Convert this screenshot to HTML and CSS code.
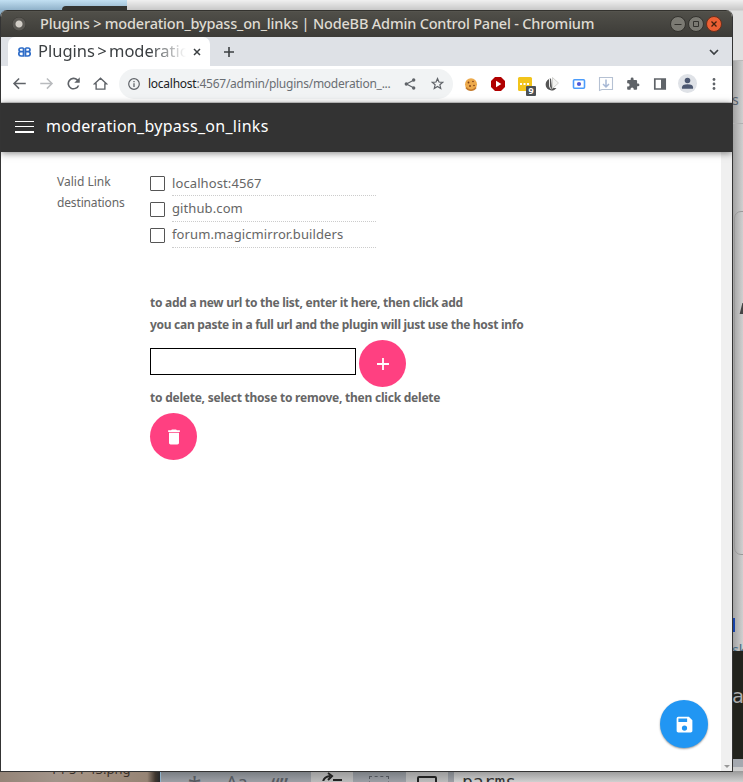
FILE: index.html
```html
<!DOCTYPE html>
<html lang="en">
<head>
<meta charset="utf-8">
<title>Plugins &gt; moderation_bypass_on_links | NodeBB Admin Control Panel</title>
<link rel="stylesheet" href="styles.css">
</head>
<body>
<div class="desktop">
  <div class="back back-folder"></div>
  <div class="back back-page"></div>
  <div class="back back-side"><span class="side-s">s</span><span class="side-card"></span><span class="side-mark"></span><span class="side-select"></span><span class="side-word">sk</span></div>
  <div class="back back-terminal">a</div>
  <div class="back back-sill"></div>
  <div class="back back-photo"><span>14-54-43.png</span></div>
  <div class="back back-tools">
    <span class="tool tool-star">*</span><span class="tool tool-aa">Aa</span><span class="tool tool-quote">“”</span>
    <span class="tool lit lit-a"><svg width="42" height="10"><path d="M12 12Q12 6 19 5M17 2l4 3-4 4M22 9h9" fill="none" stroke="#222" stroke-width="2"/></svg></span>
    <span class="tool dots"></span>
    <span class="tool lit lit-b"><i></i></span>
    <span class="tool field">parms</span>
  </div>
  <main class="window">
    <header class="titlebar">
      <span class="orb"></span>
      <h1>Plugins &gt; moderation_bypass_on_links | NodeBB Admin Control Panel - Chromium</h1>
      <div class="controls">
        <svg width="16" height="16" viewBox="0 0 16 16"><circle cx="8" cy="8" r="7.5" fill="#7b7a73" stroke="#33322e"/><path d="M4.5 8.5h7" stroke="#33322e"/></svg>
        <svg width="16" height="16" viewBox="0 0 16 16"><circle cx="8" cy="8" r="7.5" fill="#7b7a73" stroke="#33322e"/><path d="M5.500 5.500h5v5h-5z" fill="none" stroke="#33322e"/></svg>
        <svg width="16" height="16" viewBox="0 0 16 16"><circle cx="8" cy="8" r="7.5" fill="#ed6034" stroke="#6b2f1c"/><path d="M5.5 5.5l5 5m0-5l-5 5" stroke="#43210f" stroke-width="1.3"/></svg>
      </div>
    </header>
    <nav class="tabs">
      <div class="tab">
        <svg class="favicon" width="13" height="10" viewBox="0 0 13 10"><path d="M5.5 1H3Q1 1 1 2.800 1 4.700 3 4.700h2.500M3 4.700Q.8 4.700.8 6.800.8 9 3 9h2.500V1M7.500 1H10q2 0 2 1.800 0 1.900-2 1.900H7.500M10 4.700q2.200 0 2.200 2.100Q12.200 9 10 9H7.500V1" fill="none" stroke="#2f6dc8" stroke-width="1.700"/></svg>
        <span class="tab-title">Plugins &gt; moderation</span>
        <svg class="close" width="8" height="8" viewBox="0 0 8 8"><path d="M1 1l6 6m0-6L1 7" stroke="#3c4043" stroke-width="1.5"/></svg>
      </div>
      <svg class="new-tab" width="12" height="12" viewBox="0 0 12 12"><path d="M6 1v10M1 6h10" stroke="#3c4043" stroke-width="1.6"/></svg>
      <svg class="tab-menu" width="10" height="8" viewBox="0 0 10 8"><path d="M1 2l4 4 4-4" fill="none" stroke="#3c4043" stroke-width="1.7"/></svg>
    </nav>
    <div class="toolbar">
      <svg class="nav" viewBox="0 0 24 24" fill="#5f6368"><path d="M22 10.700H6.200l6-6L10.500 3l-9 9 9 9 1.700-1.700-6-6H22z"/></svg>
      <svg class="nav" viewBox="0 0 24 24" fill="#b9bbbe"><path d="M2 10.700h15.800l-6-6L13.500 3l9 9-9 9-1.700-1.700 6-6H2z"/></svg>
      <svg class="nav" viewBox="0 0 24 24" fill="#5f6368"><path d="M19 5.200A9.700 9.700 0 1 0 21.300 15h-2.700A7.100 7.100 0 1 1 17 7l-3.800 3.800H22V2z"/></svg>
      <svg class="nav" viewBox="0 0 24 24"><path d="M2.500 12.500L12 3.500l9.500 9H19V21H5v-8.500z" fill="none" stroke="#5f6368" stroke-width="2.200"/></svg>
      <div class="omnibox">
        <svg class="info" width="12" height="12" viewBox="0 0 12 12"><circle cx="6" cy="6" r="5.300" fill="none" stroke="#5f6368" stroke-width="1.200"/><path d="M6 5.200V9M6 3v1.300" stroke="#5f6368" stroke-width="1.300"/></svg>
        <span class="url"><b>localhost</b>:4567/admin/plugins/moderation_...</span>
        <svg class="share" width="12" height="12" viewBox="0 0 12 12"><path d="M9.500 2.200L2.500 6l7 3.800" fill="none" stroke="#5f6368" stroke-width="1.200"/><g fill="#5f6368"><circle cx="9.700" cy="2" r="1.700"/><circle cx="2.300" cy="6" r="1.700"/><circle cx="9.700" cy="10" r="1.700"/></g></svg>
        <svg class="star" width="13" height="13" viewBox="0 0 24 24"><path d="M12 2.800l2.700 6.400 7 .6-5.300 4.600 1.600 6.800-6-3.600-6 3.600 1.600-6.800-5.300-4.600 7-.6z" fill="none" stroke="#5f6368" stroke-width="2.200"/></svg>
      </div>
      <div class="extensions">
        <svg viewBox="0 0 16 16"><circle cx="8" cy="8.300" r="6" fill="#edaa4c"/><path d="M3 11.500a6 6 0 0 0 10 0" fill="none" stroke="#c47a2c" stroke-width="1.500"/><g fill="#7a3b16"><circle cx="5.500" cy="6.500" r=".9"/><circle cx="10" cy="5.500" r=".8"/><circle cx="11" cy="9.500" r=".8"/><circle cx="7" cy="10" r=".9"/></g></svg>
        <svg viewBox="0 0 16 16"><path d="M5 1h6l4 4v6l-4 4H5l-4-4V5z" fill="#b00000"/><path d="M6 4.700l5.300 3.300L6 11.300z" fill="#fff"/></svg>
        <span class="yellow"><svg viewBox="0 0 16 16"><rect x="1" y="1" width="14" height="14" rx="1.500" fill="#f2c41b"/><path d="M3 8h2m1.500 0h2M10 8h2" stroke="#fff" stroke-width="2"/></svg><b>9</b></span>
        <svg viewBox="0 0 16 16"><path d="M7 2.500A6 6 0 1 0 12.500 12L8 12z" fill="#555"/><path d="M5.500 3v7q0 2 2 3" stroke="#eee" fill="none"/><path d="M8.500 1.500l6 5.500-6 5.500z" fill="#f5f5f3" stroke="#c8c8c4" stroke-width=".8"/></svg>
        <svg viewBox="0 0 16 16"><rect x="2.500" y="3.800" width="11" height="8.400" rx="1" fill="#fff" stroke="#4b9cfb" stroke-width="1.600"/><circle cx="8" cy="8" r="2.100" fill="#5058d5"/></svg>
        <svg viewBox="0 0 16 16"><path d="M1.500 14.500v-13h13v12H4z" fill="none" stroke="#b5c1d3" stroke-width="1.100"/><path d="M8 3.500v7M5 8l3 3 3-3" fill="none" stroke="#a7b8d5" stroke-width="1.500"/></svg>
        <svg class="puzzle" viewBox="0 0 24 24"><path d="M20.500 11H19V7c0-1.100-.9-2-2-2h-4V3.500a2.500 2.500 0 0 0-5 0V5H4c-1.100 0-2 .9-2 2v3.800h1.500a2.700 2.700 0 0 1 0 5.400H2V20c0 1.100.9 2 2 2h3.800v-1.500a2.700 2.700 0 0 1 5.400 0V22H17c1.100 0 2-.9 2-2v-4h1.500a2.500 2.500 0 0 0 0-5z" fill="#5f6368"/></svg>
        <svg viewBox="0 0 16 16"><path d="M2.800 3h10.400v10H2.800z" fill="none" stroke="#5f6368" stroke-width="1.700"/><path d="M9 3h4v10H9z" fill="#5f6368"/></svg>
      </div>
      <svg class="avatar" width="19" height="19" viewBox="0 0 19 19"><circle cx="9.500" cy="9.500" r="9.500" fill="#dfe2e7"/><circle cx="9.500" cy="6.500" r="2.800" fill="#4d5871"/><path d="M4 14.700v-1.500q0-3 5.500-3t5.500 3v1.500z" fill="#4d5871"/></svg>
      <svg class="kebab" width="4" height="14" viewBox="0 0 4 14" fill="#5f6368"><circle cx="2" cy="2.500" r="1.400"/><circle cx="2" cy="7" r="1.400"/><circle cx="2" cy="11.500" r="1.400"/></svg>
    </div>
    <header class="page-head"><span class="burger"><i></i><i></i><i></i></span><h2>moderation_bypass_on_links</h2></header>
    <section class="page">
      <div class="content">
        <div class="label"><span>Valid Link</span><br><span class="l2">destinations</span></div>
        <div class="settings">
          <label class="option"><span class="box"></span><span class="host">localhost:4567</span></label>
          <label class="option"><span class="box"></span><span class="host raised">github.com</span></label>
          <label class="option"><span class="box"></span><span class="host raised">forum.magicmirror.builders</span></label>
          <p class="hint">to add a new url to the list, enter it here, then click add<br><span class="t2">you can paste in a full url and the plugin will just use the host info</span></p>
          <div class="add-row">
            <input type="text" aria-label="New url">
            <button class="fab" aria-label="Add"><svg width="18" height="18" viewBox="0 0 24 24" fill="#fff"><path d="M20 13.200h-6.800V20h-2.400v-6.800H4v-2.400h6.800V4h2.400v6.800H20z"/></svg></button>
          </div>
          <p class="hint del">to delete, select those to remove, then click delete</p>
          <button class="fab" aria-label="Delete"><svg width="20" height="20" viewBox="0 0 24 24" fill="#fff"><path d="M6 19c0 1.100.9 2 2 2h8c1.100 0 2-.9 2-2V7H6zM19 4h-3.500l-1-1h-5l-1 1H5v2h14z"/></svg></button>
        </div>
      </div>
      <div class="scrollbar"><i></i></div>
      <button class="save" aria-label="Save"><svg width="21" height="21" viewBox="0 0 24 24" fill="#fff"><path d="M17 3H5a2 2 0 0 0-2 2v14c0 1.100.9 2 2 2h14c1.100 0 2-.9 2-2V7zm-5 16a3 3 0 1 1 0-6 3 3 0 0 1 0 6zm3-10H5V5h10z"/></svg></button>
    </section>
  </main>
</div>
</body>
</html>
```
FILE: styles.css
```css
* { box-sizing: border-box; }
body { margin: 0; font-family: "Noto Sans", "Open Sans", sans-serif; }
h1, h2, p { margin: 0; }
button { border: 0; padding: 0; }
svg { display: block; flex: none; }
.desktop { position: relative; width: 743px; height: 782px; overflow: hidden; padding-top: 10px; background: linear-gradient(#c2e0f2, #8fb1c9 10px); }

.back { position: absolute; overflow: hidden; }
.back-folder { left: 62px; top: 6px; width: 65px; height: 10px; background: #343532; border-radius: 4px 0 0; }
.back-page { left: 127px; top: 0; width: 616px; height: 62px; background: linear-gradient(#f0f0f0, #c8c8c8 10px, #e0e0e0 11px); }
.back-side { left: 731px; top: 60px; width: 12px; height: 592px; background: linear-gradient(#b9b9b9 1px, transparent 1px), linear-gradient(transparent 63px, #b0b0b0 63px, #b0b0b0 64px, transparent 64px), linear-gradient(90deg, #999, #d0d0d0); }
.side-s { position: absolute; left: 1px; top: 30px; font-size: 14px; line-height: 20px; color: #555d68; }
.side-card { position: absolute; left: 3px; top: 151px; width: 30px; height: 344px; border: 1px solid #999; border-radius: 7px; }
.side-mark { position: absolute; left: 10px; top: 243px; width: 6px; height: 11px; background: #444; transform: skewX(-14deg); }
.side-select { position: absolute; left: 0; top: 558px; width: 4px; height: 14px; background: #1843a8; }
.side-word { position: absolute; left: 1px; top: 581px; font-size: 14px; line-height: 18px; color: #476a82; }
.back-terminal { left: 731px; top: 651px; width: 12px; height: 108px; padding: 35px 0 0 1px; background: #22231d; color: #aaa; font: 20px/20px "DejaVu Sans Mono", monospace; }
.back-sill { left: 454px; top: 759px; width: 289px; height: 23px; background: linear-gradient(#a4a8af 8px, #ccc 8px, #dadada); }
.back-photo { left: 0; top: 770px; width: 160px; height: 12px; background: linear-gradient(90deg, #958578, #a2948a 35%, #a39181 55%, #968475 92%, #40372f 97%, #26282b); }
.back-photo span { position: absolute; left: 50px; top: -7px; font-size: 13px; line-height: 13px; color: #3a3029; }
.back-tools { left: 161px; top: 771px; width: 582px; height: 11px; background: linear-gradient(#777b80, #9c9fa5); }
.tool { position: absolute; top: 0; height: 11px; color: #55595f; line-height: 20px; }
.tool-star { left: 27px; top: 0; font-size: 24px; line-height: 28px; }
.tool-aa { left: 65px; top: 1px; font-size: 18px; }
.tool-quote { left: 110px; top: 1px; font-size: 24px; line-height: 28px; }
.lit { background: linear-gradient(#999, #bbb); }
.lit-a { left: 150px; width: 42px; }
.lit-b { left: 245px; width: 42px; }
.lit-b i { display: block; margin: 5px 0 0 11px; width: 20px; height: 14px; border: 2px solid #222; border-radius: 2px; }
.dots { left: 208px; top: 5px; width: 20px; height: 14px; border: 1px dashed #50545a; }
.field { left: 293px; width: 289px; padding-left: 8px; background: linear-gradient(#999, #d0d0d0); color: #333; font: 18px/21px "DejaVu Sans Mono", monospace; }

.window { position: relative; display: flex; flex-direction: column; width: 733px; height: 762px; border: 1px solid #343434; border-top: 0; border-radius: 7px 7px 0 0; overflow: hidden; background: #fff; }
.titlebar { display: flex; align-items: center; flex: none; height: 27px; padding: 0 11px; background: linear-gradient(#33322e 1px, #5a5953 1px, #504f49 2px, #3c3b37); }
.orb { width: 14px; height: 14px; border-radius: 50%; background: radial-gradient(circle, #d2cec7 0 3px, #5c5a55 4px 6px, #383733 7px); }
.titlebar h1 { width: 600px; margin: -1px 0 0 14px; font-size: 14.500px; line-height: 20px; font-weight: 500; letter-spacing: -.19px; color: #dfdbd2; white-space: nowrap; }
.controls { display: flex; gap: 2px; margin-left: auto; margin-right: -1px; }

.tabs { display: flex; align-items: center; flex: none; height: 29px; background: #dee1e6; }
.tab { display: flex; align-items: center; align-self: stretch; width: 202px; margin-left: 7px; padding: 0 9px 0 10px; background: #fff; border-radius: 7px 7px 0 0; }
.tab-title { width: 148px; margin: -1px 0 0 7px; overflow: hidden; white-space: nowrap; font-size: 16.500px; line-height: 26px; word-spacing: -2px; color: #3c4043; -webkit-mask-image: linear-gradient(90deg, #000 112px, transparent 148px); mask-image: linear-gradient(90deg, #000 112px, transparent 148px); }
.close { margin-left: 7px; }
.new-tab { margin-left: 13px; }
.tab-menu { margin-left: auto; margin-right: 13px; }

.toolbar { display: flex; align-items: center; flex: none; height: 37px; padding: 0 16px 1px 11px; border-bottom: 1px solid #d5d5d5; }
.nav { width: 15px; height: 15px; margin-right: 12px; }
.omnibox { display: flex; align-items: center; width: 334px; height: 30px; margin-left: -1px; padding: 0 9px 0 9px; border-radius: 15px; background: #f1f3f4; }
.url { width: 246px; margin-left: 8px; font-size: 12px; color: #6a6e73; white-space: nowrap; letter-spacing: -.25px; }
.url b { font-weight: 400; color: #202124; }
.share { margin-left: 10px; }
.star { margin-left: auto; }
.extensions { display: flex; gap: 11px; margin-left: 10px; }
.extensions svg { width: 16px; height: 16px; }
.extensions .puzzle { padding: 1px; }
.yellow { position: relative; }
.yellow b { position: absolute; left: 9px; top: 10px; width: 10px; height: 10px; background: #4c5054; border-radius: 1px; color: #fff; font-size: 9px; line-height: 10px; text-align: center; }
.avatar { margin-left: 10px; }
.kebab { margin-left: auto; }

.page-head { position: relative; z-index: 1; display: flex; align-items: center; flex: none; height: 49px; padding-left: 14px; background: #333; box-shadow: 0 1px 7px rgba(0,0,0,.5); }
.burger { display: grid; gap: 3px; width: 19px; margin-top: -1px; }
.burger i { height: 1px; background: #fff; }
.burger i + i { margin-top: 1px; }
.burger i:last-child { height: 2px; }
.page-head h2 { margin: -3px 0 0 12px; font-size: 16px; font-weight: 400; letter-spacing: .28px; color: #fff; white-space: nowrap; }

.page { position: relative; display: flex; flex: 1; min-height: 0; }
.content { display: flex; flex: 1; padding: 19px 0 0 56px; color: #666; }
.label { width: 93px; font-size: 12px; line-height: 21px; white-space: nowrap; }
.label .l2 { letter-spacing: -.15px; }
.settings { width: 500px; }
.option { display: flex; height: 26px; }
.box { width: 15px; height: 15px; margin: 5px 7px 0 0; border: 1px solid #555; border-radius: 1px; }
.host { width: 204px; height: 25px; font-size: 13px; line-height: 25px; letter-spacing: .1px; border-bottom: 1px dotted #ccc; white-space: nowrap; }
.host.raised { line-height: 23px; }
.hint { margin-top: 43px; font-size: 12px; font-weight: 700; line-height: 22px; letter-spacing: -.27px; white-space: nowrap; }
.hint .t2 { letter-spacing: -.29px; }
.add-row { display: flex; align-items: center; gap: 3px; margin-top: 4px; }
.add-row input { width: 206px; height: 27px; margin-top: -4px; border: 1px solid #000; padding: 0 4px; background: #fff; }
.fab { display: grid; place-items: center; width: 47px; height: 47px; border-radius: 50%; background: #ff4081; }
.hint.del { margin: 0 0 4px; letter-spacing: -.23px; }
.scrollbar { display: flex; align-items: flex-end; justify-content: center; width: 11px; background: #f0f0f0; }
.scrollbar i { margin-bottom: 3px; border: 3px solid transparent; border-top-color: #999; border-bottom: 0; }
.save { position: absolute; right: 24px; bottom: 23px; display: grid; place-items: center; width: 48px; height: 48px; border-radius: 50%; background: #2196f3; box-shadow: 0 1px 2px rgba(0,0,0,.4); }
```
